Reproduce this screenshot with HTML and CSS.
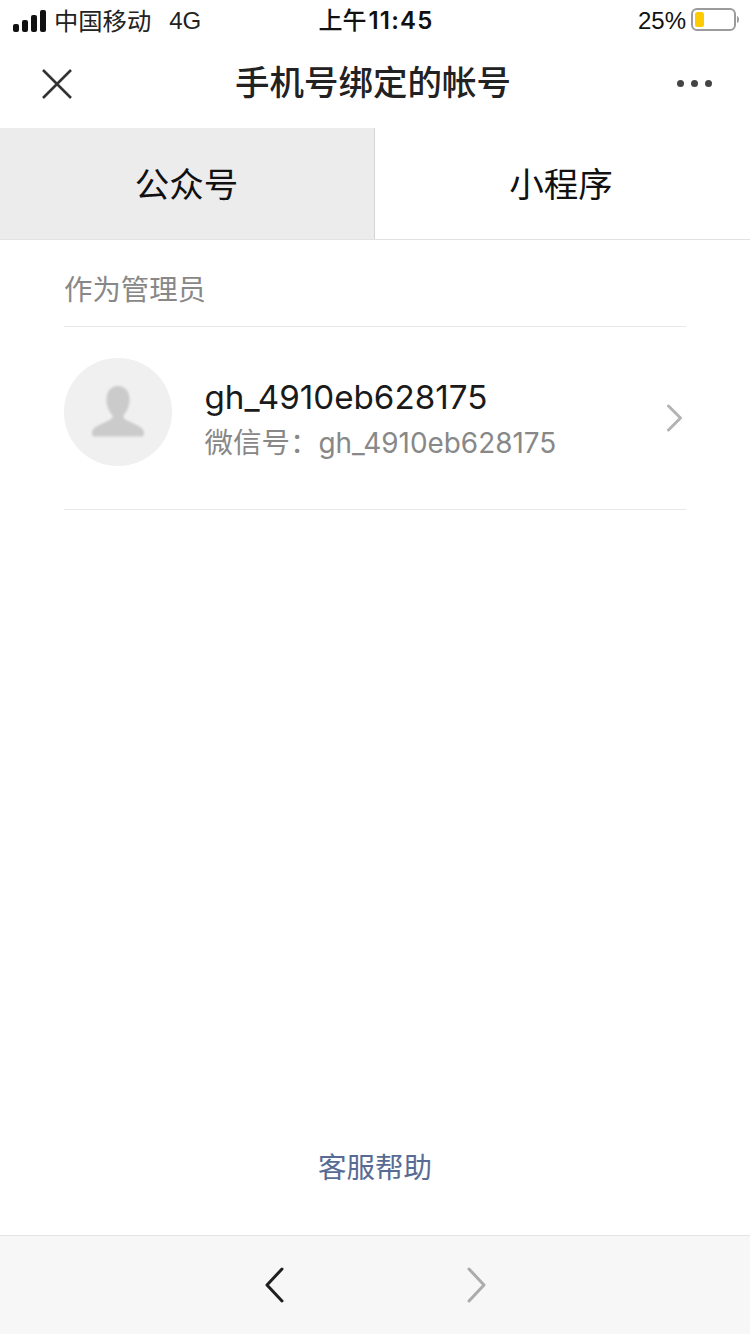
FILE: index.html
```html
<!DOCTYPE html>
<html lang="zh-CN">
<head>
<meta charset="utf-8">
<title>手机号绑定的帐号</title>
<link rel="stylesheet" href="styles.css">
</head>
<body>
<div class="app">
  <div class="status">
    <div class="status-left">
      <svg class="signal" width="34" height="22" viewBox="0 0 34 22"><rect x="0" y="14" width="6" height="8" rx="2"/><rect x="9" y="10" width="6" height="12" rx="2"/><rect x="18" y="5" width="6" height="17" rx="2"/><rect x="27" y="0" width="6" height="22" rx="2"/></svg>
      <span class="carrier">中国移动</span>
      <span class="net">4G</span>
    </div>
    <div class="clock">上午<span class="clock-num">11:45</span></div>
    <div class="status-right">
      <span class="pct">25%</span>
      <svg class="battery" width="48" height="24" viewBox="0 0 48 24"><rect x="1" y="1" width="43" height="21" rx="5" fill="none" stroke="#9b9b9b" stroke-width="2"/><rect x="4" y="4" width="9" height="15" rx="2.5" fill="#fecb00"/><path d="M46 8c1.500 .5 2 2 2 3.500s-.5 3-2 3.500z" fill="#9b9b9b"/></svg>
    </div>
  </div>

  <div class="nav">
    <svg class="nav-close" width="32" height="32" viewBox="0 0 32 32"><path d="M2 2 30 30M30 2 2 30" fill="none" stroke="#333" stroke-width="2.600"/></svg>
    <h1 class="nav-title">手机号绑定的帐号</h1>
    <div class="nav-more"><i></i><i></i><i></i></div>
  </div>

  <div class="tabs">
    <div class="tab tab-active">公众号</div>
    <div class="tab tab-plain">小程序</div>
  </div>

  <main class="content">
    <div class="section-title">作为管理员</div>
    <div class="account">
      <div class="avatar">
        <svg width="54" height="52" viewBox="0 0 56 54"><path d="M28 0c7.500 0 12 6 12 14 0 7-3 13-6 16-1 2 0 4 3 5.500 6 3 11 5 15 7.500 2 1.500 3 3.500 3 6.500 0 2-1 3-3 3H4c-2 0-3-1-3-3 0-3 1-5 3-6.500 4-2.500 9-4.500 15-7.500 3-1.500 4-3.500 3-5.500-3-3-6-9-6-16 0-8 4.500-14 12-14z" fill="#cbcbcb"/></svg>
      </div>
      <div class="account-info">
        <div class="account-name">gh_4910eb628175</div>
        <div class="account-id"><span class="account-label">微信号：</span>gh_4910eb628175</div>
      </div>
      <svg class="chevron" width="18" height="28" viewBox="0 0 18 28"><path d="M3.500 2 15.500 14 3.500 26" fill="none" stroke="#b4b4b4" stroke-width="3" stroke-linecap="round" stroke-linejoin="round"/></svg>
    </div>
  </main>

  <div class="help">客服帮助</div>

  <div class="toolbar">
    <svg width="20" height="36" viewBox="0 0 20 36"><path d="M18 2 3 18 18 34" fill="none" stroke="#1f1f1f" stroke-width="3" stroke-linecap="round" stroke-linejoin="round"/></svg>
    <svg width="20" height="36" viewBox="0 0 20 36"><path d="M3 2 18 18 3 34" fill="none" stroke="#ababab" stroke-width="3" stroke-linecap="round" stroke-linejoin="round"/></svg>
  </div>
</div>
</body>
</html>
```

FILE: styles.css
```css
* { box-sizing: border-box; }
html, body { margin: 0; padding: 0; background: #fff; }
body { font-family: "Liberation Sans", "Noto Sans CJK SC", sans-serif; color: #1a1a1a; }
.app { width: 750px; height: 1334px; display: flex; flex-direction: column; overflow: hidden; }

.status { height: 40px; flex: none; display: grid; grid-template-columns: 1fr auto 1fr; align-items: center; padding: 0 11px 0 13px; color: #111; font-size: 24px; }
.status-left { display: flex; align-items: center; }
.signal { fill: #111; margin-right: 8px; margin-top: 1px; }
.carrier { font-size: 24.300px; color: #222; padding-bottom: 2px; margin-left: -1px; }
.net { margin-left: 18px; font-size: 24px; color: #222; padding-top: 2px; }
.clock { font-family: "Inter", "Noto Sans CJK SC", sans-serif; font-size: 24px; font-weight: 500; color: #111; padding-bottom: 4px; }
.clock-num { font-weight: 600; letter-spacing: 1.200px; margin-left: 2px; }
.status-right { display: flex; align-items: center; justify-content: flex-end; gap: 5px; }
.pct { font-size: 24px; padding-top: 2px; }

.nav { height: 88px; flex: none; display: flex; align-items: center; justify-content: space-between; padding: 0 38px 0 41px; position: relative; }
.nav-close { display: block; margin-bottom: 1px; }
.nav-title { position: absolute; left: 0; right: 4px; top: 0; line-height: 87px; margin: 0; text-align: center; font-size: 34.500px; font-weight: 500; color: #222; pointer-events: none; }
.nav-more { display: flex; gap: 7px; margin-bottom: 1px; }
.nav-more i { display: block; width: 7px; height: 7px; border-radius: 50%; background: #444; }

.tabs { height: 112px; flex: none; display: flex; border-bottom: 1px solid #e2e2e2; }
.tab { flex: 1; display: flex; align-items: center; justify-content: center; font-size: 34.500px; color: #111; padding-bottom: 4px; }
.tab-active { background: #ececec; border-right: 1px solid #d4d4d4; flex: none; width: 375px; padding-right: 1px; }
.tab-plain { padding-right: 3px; }

.content { flex: 1; padding: 0 64px; }
.section-title { height: 87px; border-bottom: 1px solid #e8e8e8; padding-top: 29px; font-size: 28.400px; line-height: 42px; color: #888; }
.account { height: 183px; display: flex; align-items: center; border-bottom: 1px solid #e8e8e8; }
.avatar { width: 108px; height: 108px; flex: none; align-self: flex-start; margin-top: 31px; border-radius: 50%; background: #f0f0f0; display: flex; align-items: center; justify-content: center; }
.avatar svg { display: block; filter: blur(1px); }
.account-info { margin-left: 32.500px; flex: 1; padding-top: 4px; }
.account-name { font-family: "Inter", "Liberation Sans", sans-serif; font-size: 33.200px; line-height: 44px; color: #1a1a1a; }
.account-id { font-family: "Inter", "Noto Sans CJK SC", sans-serif; font-size: 27.900px; line-height: 44px; color: #888; }
.account-label { font-family: "Noto Sans CJK SC", sans-serif; font-size: 28.500px; }
.chevron { flex: none; margin-right: 3px; }

.help { flex: none; height: 131px; padding-top: 43px; display: flex; justify-content: center; font-size: 28.500px; line-height: 42px; color: #576b95; }

.toolbar { height: 99px; flex: none; background: #f7f7f7; border-top: 1px solid #e4e4e4; display: flex; align-items: center; justify-content: center; gap: 182px; }
```
